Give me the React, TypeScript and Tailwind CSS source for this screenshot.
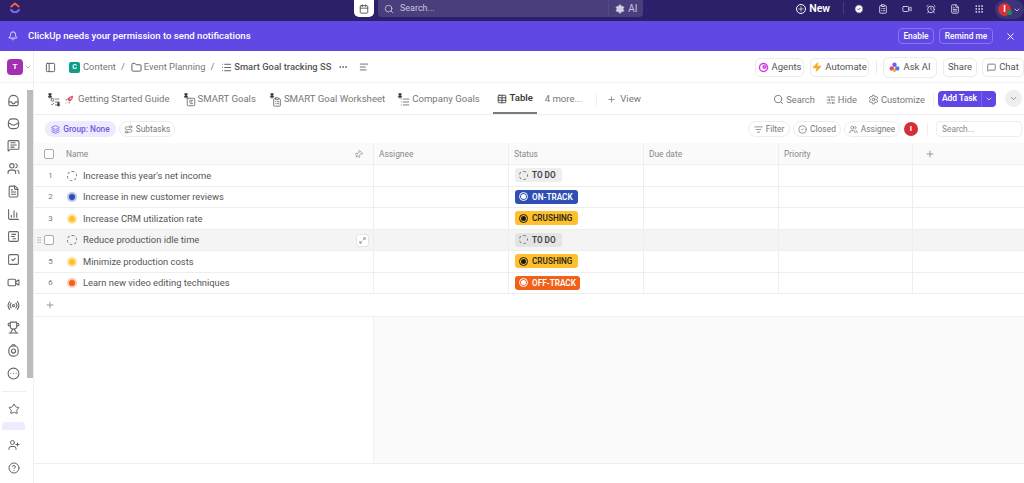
import type { ReactNode } from "react";
import {
  Bell, Calendar, Search, Plus, CircleCheck, ClipboardList, Video, AlarmClock, FileText, Grip, ChevronDown, X,
  PanelLeft, Folder, List, Ellipsis, AlignLeft, Zap, MessageSquare, Pin, Table, SlidersHorizontal,
  Settings, Layers, Route, ListFilter, Users, MessageSquareText, SquareChartGantt, ChartColumn,
  SquareCheck, Radio, Trophy, CircleEllipsis, Star, UserPlus, CircleHelp, Maximize2, GripVertical, ListTodo,
} from "lucide-react";

const FONT = "font-['Roboto','Noto_Sans',sans-serif]";

const tasks = [
  { n: 1, name: "Increase this year's net income", status: "todo" },
  { n: 2, name: "Increase in new customer reviews", status: "ontrack" },
  { n: 3, name: "Increase CRM utilization rate", status: "crushing" },
  { n: 4, name: "Reduce production idle time", status: "todo" },
  { n: 5, name: "Minimize production costs", status: "crushing" },
  { n: 6, name: "Learn new video editing techniques", status: "offtrack" },
];

function StatusDot({ status }: { status: string }) {
  if (status === "todo") {
    return <span className="block h-[10px] w-[10px] rounded-full border border-dashed border-[#777]" />;
  }
  const styles: Record<string, string> = {
    ontrack: "bg-[#b9c4ea] text-[#2f4fb5]",
    crushing: "bg-[#ffe3a0] text-[#ffc02e]",
    offtrack: "bg-[#fbc9ae] text-[#f0611a]",
  };
  return (
    <span className={`flex h-[10px] w-[10px] items-center justify-center rounded-full ${styles[status]}`}>
      <span className="h-[6px] w-[6px] rounded-full bg-current" />
    </span>
  );
}

function StatusPill({ status, hovered }: { status: string; hovered?: boolean }) {
  if (status === "todo") {
    return (
      <span className={`flex h-[14px] w-[47px] items-center gap-[4px] rounded-[3px] pl-[4px] text-[8.2px] font-semibold text-[#3c3c3c] ${hovered ? "bg-[#e4e4e4]" : "bg-[#eeeeee]"}`}>
        <span className="h-[9px] w-[9px] rounded-full border border-dashed border-[#777]" />
        TO DO
      </span>
    );
  }
  const cfg: Record<string, { label: string; cls: string; w: string; ring: string; dot: string }> = {
    ontrack: { label: "ON-TRACK", cls: "bg-[#2f4fb5] text-white", w: "w-[63px]", ring: "border-white", dot: "bg-white" },
    crushing: { label: "CRUSHING", cls: "bg-[#ffc02e] text-[#2e2a1a]", w: "w-[63px]", ring: "border-[#1c1a10]", dot: "bg-[#1c1a10]" },
    offtrack: { label: "OFF-TRACK", cls: "bg-[#f0611a] text-white", w: "w-[65px]", ring: "border-white", dot: "bg-white" },
  };
  const c = cfg[status];
  return (
    <span className={`flex h-[14px] items-center gap-[4px] rounded-[3px] pl-[4px] text-[8.2px] font-semibold ${c.cls} ${c.w}`}>
      <span className={`flex h-[9px] w-[9px] items-center justify-center rounded-full border ${c.ring}`}>
        <span className={`h-[5px] w-[5px] rounded-full ${c.dot}`} />
      </span>
      {c.label}
    </span>
  );
}

function Pinned({ children, both }: { children: ReactNode; both?: boolean }) {
  return (
    <span className="relative flex h-[14px] w-[13px] items-end justify-end text-[#666]">
      <Pin size={6} className="absolute left-0 top-0 fill-[#333] text-[#333]" />
      {children}
      {both && <Pin size={5} className="absolute bottom-0 right-[-1px] fill-[#333] text-[#333]" />}
    </span>
  );
}

function Chip({ icon, label, className = "" }: { icon: ReactNode; label: string; className?: string }) {
  return (
    <span className={`flex h-[16px] items-center justify-center gap-[3px] rounded-full border border-[#eeeeee] text-[8.4px] text-[#777] ${className}`}>
      {icon}
      {label}
    </span>
  );
}

function TopButton({ children, className = "" }: { children: ReactNode; className?: string }) {
  return (
    <span className={`flex h-[19px] items-center justify-center gap-[3px] rounded-[5px] border border-[#ececec] text-[9.5px] text-[#555] ${className}`}>
      {children}
    </span>
  );
}

function AgentsIcon() {
  return (
    <svg viewBox="0 0 12 12" className="h-[11px] w-[11px]" fill="none" stroke="#d13be0" strokeWidth="1.6">
      <circle cx="6" cy="6" r="4.4" />
      <circle cx="7" cy="5.5" r="1.4" />
    </svg>
  );
}

function AskAiIcon() {
  return (
    <svg viewBox="0 0 12 12" className="h-[11px] w-[11px]">
      <circle cx="6" cy="3" r="2.4" fill="#7b5be6" />
      <circle cx="3" cy="7" r="2.4" fill="#e0457b" />
      <circle cx="9" cy="7" r="2.4" fill="#3b82f6" />
      <circle cx="6" cy="9" r="2" fill="#f5a623" />
    </svg>
  );
}

function RocketIcon() {
  return (
    <svg viewBox="0 0 12 12" className="ml-[4px] h-[10px] w-[10px]">
      <path d="M11 1C8 1 5.5 2.4 3.8 5.2L6.8 8.2C9.6 6.5 11 4 11 1Z" fill="#e8506a" />
      <circle cx="8" cy="4" r="1" fill="#cfe3f7" />
      <path d="M3.8 5.2L1.5 5.5L3 7ZM6.8 8.2L6.5 10.5L5 9Z" fill="#3f6fd1" />
      <path d="M3.4 8.6L1 11L2.2 8.4Z" fill="#f5a623" />
    </svg>
  );
}

function HomeTrayIcon({ size = 13 }: { size?: number }) {
  return (
    <svg viewBox="0 0 14 14" width={size} height={size} fill="none" stroke="currentColor" strokeWidth="1.2" strokeLinejoin="round">
      <path d="M2 6.5C2 3.5 4.2 1.5 7 1.5S12 3.5 12 6.5V11a1.5 1.5 0 0 1-1.5 1.5h-7A1.5 1.5 0 0 1 2 11Z" />
      <path d="M2 8.5H5C5.2 10 6 10.6 7 10.6S8.8 10 9 8.5H12" />
    </svg>
  );
}

function InboxRoundIcon({ size = 13 }: { size?: number }) {
  return (
    <svg viewBox="0 0 14 14" width={size} height={size} fill="none" stroke="currentColor" strokeWidth="1.2" strokeLinejoin="round">
      <rect x="1.5" y="2" width="11" height="10.5" rx="4" />
      <path d="M1.8 6.5L5 8.2C6.2 8.9 7.8 8.9 9 8.2L12.2 6.5" />
    </svg>
  );
}

function ClipTimerIcon({ size = 13 }: { size?: number }) {
  return (
    <svg viewBox="0 0 14 14" width={size} height={size} fill="none" stroke="currentColor" strokeWidth="1.2" strokeLinejoin="round">
      <path d="M5 2.2L5.6 1h2.8L9 2.2" />
      <rect x="2" y="2.2" width="10" height="10.8" rx="4.2" />
      <circle cx="7" cy="7.6" r="2.2" />
    </svg>
  );
}

const sideIcons = [HomeTrayIcon, InboxRoundIcon, MessageSquareText, Users, FileText, ChartColumn, SquareChartGantt, SquareCheck, Video, Radio, Trophy, ClipTimerIcon, CircleEllipsis];

export default function App() {
  return (
    <div className={`flex h-[483px] w-[1024px] flex-col overflow-hidden bg-white ${FONT}`}>
      {/* top bar */}
      <div className="flex h-[21px] shrink-0 items-start bg-[#2b2069] text-white">
        <svg viewBox="0 0 16 16" className="ml-[9px] mt-[2px] h-[12px] w-[12px]" fill="none" strokeWidth="2.6" strokeLinecap="round" strokeLinejoin="round">
          <path d="M3 6l5-4 5 4" stroke="#f5633d" />
          <path d="M2.5 10.5C5 14.5 11 14.5 13.5 10.5" stroke="#7b68ee" />
        </svg>
        <span className="ml-[333px] flex h-[17px] w-[20px] items-center justify-center rounded-b-[5px] bg-white text-[#444]">
          <Calendar size={10} />
        </span>
        <div className="ml-[4px] flex h-[17px] w-[266px] items-center rounded-b-[4px] bg-[#4a3f7c] pl-[6px] text-[9px] text-[#c9c5dc]">
          <Search size={10} />
          <span className="ml-[6px] flex-1">Search...</span>
          <span className="flex h-full w-[35px] items-center gap-[3px] border-l border-[#544a85] pl-[6px] text-[10px]">
            <Settings size={10} className="fill-[#d8d5e6]" />
            AI
          </span>
        </div>
        <div className="ml-[153px] flex h-[17px] items-center gap-[3px] text-[10.5px] font-semibold">
          <Plus size={10} className="rounded-full border border-white" />
          New
        </div>
        <span className="ml-[13px] mt-[2px] h-[12px] w-px bg-[#453b7d]" />
        <div className="ml-[10px] flex h-[17px] items-center gap-[14px] text-[#e8e6f3]">
          <CircleCheck size={10} className="fill-white text-[#2b2069]" />
          <ClipboardList size={10} />
          <Video size={10} />
          <AlarmClock size={10} />
          <FileText size={10} />
          <Grip size={10} />
        </div>
        <div className="relative ml-[11px] flex h-[19px] w-[29px] items-center rounded-full bg-[#3d3378] pl-[3px]">
          <span className="flex h-[13px] w-[13px] items-center justify-center rounded-full bg-[#d62f36] text-[9px] font-bold">I</span>
          <span className="absolute left-[12px] top-[10px] h-[5px] w-[5px] rounded-full bg-[#1f8a5a]" />
          <ChevronDown size={8} className="ml-[2px]" />
        </div>
      </div>

      {/* notification banner */}
      <div className="flex h-[30px] shrink-0 items-center bg-[#6048e4] text-white">
        <Bell size={10} className="ml-[8px]" />
        <span className="ml-[10px] flex-1 text-[9.6px] font-medium">ClickUp needs your permission to send notifications</span>
        <span className="flex h-[16px] w-[36px] items-center justify-center rounded-[4px] border border-[#8a77ee] text-[8.4px] font-medium">Enable</span>
        <span className="ml-[5px] flex h-[16px] w-[54px] items-center justify-center rounded-[4px] border border-[#8a77ee] text-[8.4px] font-medium">Remind me</span>
        <X size={11} className="ml-[12px] mr-[8px]" />
      </div>

      <div className="flex min-h-0 flex-1">
        {/* sidebar */}
        <aside className="flex w-[34px] shrink-0 flex-col border-r border-[#eeeeee]">
          <div className="flex h-[32px] shrink-0 items-center border-b border-[#f4f4f4] pl-[7px]">
            <span className="flex h-[16px] w-[16px] items-center justify-center rounded-[4px] bg-[#a42fb0] text-[8px] font-bold text-white">T</span>
            <ChevronDown size={8} className="ml-[1px] text-[#888]" />
          </div>
          <div className="flex min-h-0 flex-1">
            <div className="flex w-[27px] flex-col items-center pt-[6px] text-[#666]">
              {sideIcons.map((Icon, i) => (
                <span key={i} className="flex h-[22.75px] shrink-0 items-center justify-center">
                  <Icon size={13} />
                </span>
              ))}
              <span className="mt-[6px] h-px w-[24px] bg-[#eeeeee]" />
              <Star size={12} className="mt-[11px]" />
              <span className="mt-[7px] h-[8px] w-[23px] rounded-t-[4px] bg-[#eeebff]" />
              <UserPlus size={12} className="mt-[9px]" />
              <CircleHelp size={12} className="mt-[11px]" />
            </div>
            <div className="w-[6px] pt-[7px]">
              <div className="h-[288px] bg-[#bcbcbc]" />
            </div>
          </div>
        </aside>

        <main className="flex min-w-0 flex-1 flex-col">
          {/* breadcrumb row */}
          <div className="flex h-[32px] shrink-0 items-center border-b border-[#f4f4f4] pt-[1px] text-[9.4px] text-[#777]">
            <PanelLeft size={11} className="ml-[11px] text-[#555]" />
            <span className="ml-[13px] flex h-[11px] w-[11px] items-center justify-center rounded-[2px] bg-[#0f9d8a] text-[7px] font-bold text-white">C</span>
            <span className="ml-[3px]">Content</span>
            <span className="ml-[5px]">/</span>
            <Folder size={11} className="ml-[6px] text-[#555]" />
            <span className="ml-[2px]">Event Planning</span>
            <span className="ml-[5px]">/</span>
            <List size={11} className="ml-[7px] text-[#555]" />
            <span className="ml-[2px] font-medium text-[#555]">Smart Goal tracking SS</span>
            <Ellipsis size={10} className="ml-[7px] text-[#555]" />
            <AlignLeft size={10} className="ml-[11px] text-[#555]" />
            <div className="ml-auto flex items-center">
              <TopButton className="w-[49px]"><AgentsIcon />Agents</TopButton>
              <TopButton className="ml-[6px] w-[59px]"><Zap size={10} className="fill-[#f5a623] text-[#f5a623]" />Automate</TopButton>
              <span className="ml-[7px] h-[12px] w-px bg-[#e8e8e8]" />
              <TopButton className="ml-[6px] h-[21px] w-[54px]"><AskAiIcon />Ask AI</TopButton>
              <TopButton className="ml-[6px] w-[34px]">Share</TopButton>
              <TopButton className="ml-[5px] w-[42px]"><MessageSquare size={9} />Chat</TopButton>
            </div>
          </div>

          {/* view tabs */}
          <div className="flex h-[32px] shrink-0 items-center border-b border-[#eeeeee] pt-[2px] text-[9.6px] text-[#777]">
            <span className="ml-[13px]"><Pinned both><ListTodo size={10} /></Pinned></span>
            <RocketIcon />
            <span className="ml-[4px]">Getting Started Guide</span>
            <span className="ml-[13px]"><Pinned><SquareChartGantt size={10} /></Pinned></span>
            <span className="ml-[2px]">SMART Goals</span>
            <span className="ml-[13px]"><Pinned><ClipboardList size={10} /></Pinned></span>
            <span className="ml-[2px]">SMART Goal Worksheet</span>
            <span className="ml-[12px]"><Pinned><List size={10} /></Pinned></span>
            <span className="ml-[2px]">Company Goals</span>
            <span className="ml-[13px] flex h-full w-[44px] items-center justify-center gap-[3px] border-b-2 border-[#7a7a7a] font-medium text-[#333]">
              <Table size={10} />
              Table
            </span>
            <span className="ml-[8px]">4 more...</span>
            <span className="ml-[14px] h-[12px] w-px bg-[#eeeeee]" />
            <Plus size={9} className="ml-[10px]" />
            <span className="ml-[4px]">View</span>
            <div className="ml-auto flex items-center text-[9.3px]">
              <Search size={11} />
              <span className="ml-[2px]">Search</span>
              <SlidersHorizontal size={10} className="ml-[11px]" />
              <span className="ml-[2px]">Hide</span>
              <Settings size={11} className="ml-[11px]" />
              <span className="ml-[2px]">Customize</span>
              <span className="ml-[8px] h-[12px] w-px bg-[#eeeeee]" />
              <span className="mb-[2px] ml-[4px] flex h-[16px] w-[58px] items-center rounded-[4px] bg-[#5f46e5] text-[8.5px] font-semibold text-white">
                <span className="flex-1 text-center">Add Task</span>
                <span className="flex h-full w-[15px] items-center justify-center border-l border-[#7a66ea]"><ChevronDown size={8} /></span>
              </span>
              <span className="mb-[2px] ml-[9px] mr-[2px] flex h-[17px] w-[17px] items-center justify-center rounded-full bg-[#eeeeee]"><ChevronDown size={9} /></span>
            </div>
          </div>

          {/* filter row */}
          <div className="flex h-[28px] shrink-0 items-center pl-[11px]">
            <span className="flex h-[16px] w-[71px] items-center justify-center gap-[3px] rounded-full bg-[#eeebff] text-[8.3px] font-medium text-[#6b5be0]">
              <Layers size={9} />
              Group: None
            </span>
            <Chip className="ml-[3px] w-[56px]" icon={<Route size={9} />} label="Subtasks" />
            <Chip className="ml-auto w-[42px]" icon={<ListFilter size={9} />} label="Filter" />
            <Chip className="ml-[3px] w-[48px]" icon={<CircleCheck size={9} />} label="Closed" />
            <Chip className="ml-[3px] w-[56px]" icon={<Users size={9} />} label="Assignee" />
            <span className="ml-[4px] flex h-[14px] w-[14px] items-center justify-center rounded-full bg-[#d62f36] text-[8px] font-bold text-white">I</span>
            <span className="ml-[9px] h-[12px] w-px bg-[#eeeeee]" />
            <span className="ml-[8px] mr-[2px] flex h-[16px] w-[86px] items-center rounded-[4px] border border-[#eeeeee] pl-[5px] text-[8.4px] text-[#888]">Search...</span>
          </div>

          {/* table */}
          <div className="grid shrink-0 grid-cols-[339px_135px_135px_135px_134px_112px] text-[8.4px] text-[#888]">
            <div className="flex h-[22px] items-center border-b border-[#eeeeee] bg-[#fafafa] pt-[1px]">
              <span className="ml-[10px] h-[10px] w-[10px] rounded-[2px] border border-[#aaaaaa] bg-white" />
              <span className="ml-[12px] flex-1">Name</span>
              <Pin size={9} className="mr-[10px] rotate-45" />
            </div>
            {["Assignee", "Status", "Due date", "Priority"].map((h) => (
              <div key={h} className="flex h-[22px] items-center border-b border-l border-[#eeeeee] bg-[#fafafa] pl-[5px] pt-[1px]">{h}</div>
            ))}
            <div className="flex h-[22px] items-center border-b border-l border-[#eeeeee] bg-[#fafafa] pl-[12px]">
              <Plus size={10} />
            </div>
          </div>
          {tasks.map((t) => {
            const hovered = t.n === 4;
            const bg = hovered ? "bg-[#f4f4f4]" : "bg-white";
            return (
              <div key={t.n} className="grid h-[21.5px] shrink-0 grid-cols-[339px_135px_135px_135px_134px_112px]">
                <div className={`flex items-center border-b border-[#eeeeee] pt-[1px] ${bg}`}>
                  {hovered ? (
                    <>
                      <GripVertical size={8} className="ml-[1px] text-[#bbb]" />
                      <span className="ml-[1px] h-[10px] w-[10px] rounded-[2px] border border-[#aaaaaa] bg-white" />
                      <span className="ml-[13px]"><StatusDot status={t.status} /></span>
                    </>
                  ) : (
                    <>
                      <span className="w-[33px] text-center text-[8px] text-[#777]">{t.n}</span>
                      <StatusDot status={t.status} />
                    </>
                  )}
                  <span className="ml-[6px] flex-1 text-[9.4px] text-[#555]">{t.name}</span>
                  {hovered && (
                    <span className="mr-[4px] flex h-[13px] w-[13px] items-center justify-center rounded-[3px] border border-[#e4e4e4] bg-white text-[#666]">
                      <Maximize2 size={7} />
                    </span>
                  )}
                </div>
                <div className={`border-b border-l border-[#eeeeee] ${bg}`} />
                <div className={`flex items-center border-b border-l border-[#eeeeee] pl-[6px] ${bg}`}>
                  <StatusPill status={t.status} hovered={hovered} />
                </div>
                <div className={`border-b border-l border-[#eeeeee] ${bg}`} />
                <div className={`border-b border-l border-[#eeeeee] ${bg}`} />
                <div className={`border-b border-l border-[#eeeeee] ${bg}`} />
              </div>
            );
          })}
          <div className="flex h-[23px] shrink-0 items-center border-b border-[#f0f0f0] pl-[11px] text-[#888]">
            <Plus size={10} />
          </div>

          <div className="flex min-h-0 flex-1 border-b border-[#eeeeee]">
            <div className="w-[339px] shrink-0" />
            <div className="flex-1 border-l border-[#f0f0f0] bg-[#fafafa]" />
          </div>
          <div className="h-[19px] shrink-0" />
        </main>
      </div>
    </div>
  );
}
